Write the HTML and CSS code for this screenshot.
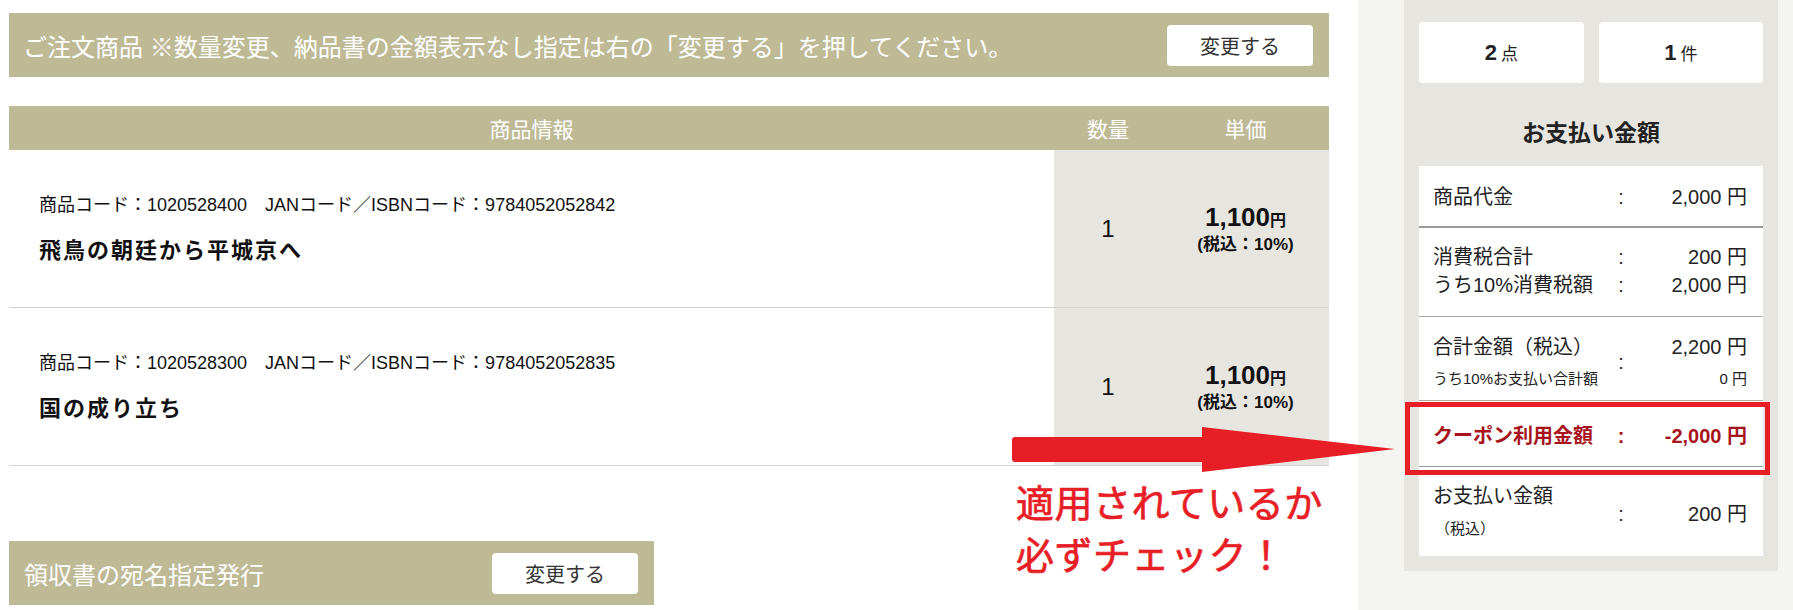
FILE: index.html
```html
<!DOCTYPE html>
<html lang="ja">
<head>
<meta charset="UTF-8">
<meta name="viewport" content="width=device-width, initial-scale=1.0">
<title>ご注文内容の確認</title>
<link rel="stylesheet" href="styles.css">
</head>
<body>
<div class="page">
  <div class="main">
    <div class="bar bar-order">
      <p class="bar-title">ご注文商品 ※数量変更、納品書の金額表示なし指定は右の「変更する」を押してください。</p>
      <button class="btn">変更する</button>
    </div>

    <div class="items">
      <div class="items-head">
        <div>商品情報</div>
        <div>数量</div>
        <div>単価</div>
      </div>
      <div class="item">
        <div class="item-info">
          <p class="item-code">商品コード：1020528400　JANコード／ISBNコード：9784052052842</p>
          <p class="item-name">飛鳥の朝廷から平城京へ</p>
        </div>
        <div class="item-qty">1</div>
        <div class="item-price">
          <p class="price"><b>1,100</b><span>円</span></p>
          <p class="tax">(税込：10%)</p>
        </div>
      </div>
      <div class="item">
        <div class="item-info">
          <p class="item-code">商品コード：1020528300　JANコード／ISBNコード：9784052052835</p>
          <p class="item-name">国の成り立ち</p>
        </div>
        <div class="item-qty">1</div>
        <div class="item-price">
          <p class="price"><b>1,100</b><span>円</span></p>
          <p class="tax">(税込：10%)</p>
        </div>
      </div>
    </div>

    <div class="bar bar-receipt">
      <p class="bar-title">領収書の宛名指定発行</p>
      <button class="btn">変更する</button>
    </div>
  </div>

  <aside class="side">
    <div class="panel">
      <div class="counts">
        <div class="count"><b>2</b> 点</div>
        <div class="count"><b>1</b> 件</div>
      </div>
      <h2 class="panel-title">お支払い金額</h2>
      <div class="summary">
        <div class="sum-row row-goods">
          <span>商品代金</span><span class="colon">:</span><span class="val">2,000 円</span>
        </div>
        <div class="sum-row row-tax">
          <span>消費税合計</span><span class="colon">:</span><span class="val">200 円</span>
          <span>うち10%消費税額</span><span class="colon">:</span><span class="val">2,000 円</span>
        </div>
        <div class="sum-row row-total">
          <span>合計金額（税込）</span><span class="colon span2">:</span><span class="val">2,200 円</span>
          <span class="small">うち10%お支払い合計額</span><span class="val small">0 円</span>
        </div>
        <div class="sum-row row-coupon">
          <span>クーポン利用金額</span><span class="colon">:</span><span class="val">-2,000 円</span>
        </div>
        <div class="sum-row row-pay">
          <span>お支払い金額</span><span class="colon span2">:</span><span class="val span2">200 円</span>
          <span class="small note">（税込）</span>
        </div>
      </div>
    </div>
  </aside>

  <!-- 注意書き (画像上の赤い矢印と文字) -->
  <svg class="note-arrow" width="390" height="50" viewBox="0 0 390 50">
    <path d="M5 12 H192 V2 L385 24 L192 47 V37 H5 Q2 37 2 34 V15 Q2 12 5 12 Z" fill="#e81e27"/>
  </svg>
  <p class="note-text">適用されているか<br>必ずチェック！</p>
</div>
</body>
</html>
```

FILE: styles.css
```css
body {
  margin: 0;
  background: #fff;
  color: #111;
  font-family: "Liberation Sans", "Noto Sans CJK JP", sans-serif;
}
p, h2 {
  margin: 0;
}
.page {
  position: relative;
  display: flex;
  min-height: 610px;
}
.main {
  width: 1320px;
  margin-left: 9px;
  padding-top: 13px;
}

/* 見出しバー */
.bar {
  display: flex;
  align-items: center;
  justify-content: space-between;
  height: 64px;
  padding: 0 16px 0 14px;
  box-sizing: border-box;
  background: #bebA96;
}
.bar-title {
  color: #fff;
  font-size: 24px;
}
.btn {
  width: 146px;
  height: 41px;
  border: none;
  border-radius: 4px;
  background: #fff;
  color: #333;
  font-family: inherit;
  font-size: 20px;
  cursor: pointer;
}
.bar-receipt {
  width: 645px;
  margin-top: 75px;
  padding-left: 15px;
}

/* 商品テーブル */
.items {
  margin-top: 29px;
}
.items-head,
.item {
  display: grid;
  grid-template-columns: 1045px 108px 167px;
}
.items-head {
  height: 44px;
  background: #bebA96;
  color: #fff;
  font-size: 21px;
}
.items-head div {
  display: flex;
  align-items: center;
  justify-content: center;
}
.item {
  height: 158px;
  box-sizing: border-box;
  border-bottom: 1px solid #d4d4d4;
}
.item-info {
  display: flex;
  flex-direction: column;
  justify-content: center;
  padding-left: 30px;
  padding-top: 2px;
}
.item-code {
  font-size: 18px;
  line-height: 26px;
  margin-bottom: 17px;
}
.item-name {
  font-size: 22px;
  line-height: 32px;
  font-weight: bold;
  letter-spacing: 2px;
}
.item-qty,
.item-price {
  display: flex;
  flex-direction: column;
  align-items: center;
  justify-content: center;
  background: #e6e5df;
}
.item-qty {
  font-size: 24px;
}
.price {
  line-height: 28px;
}
.price b {
  font-size: 26px;
}
.price span {
  font-size: 16px;
  font-weight: bold;
}
.tax {
  font-size: 17px;
  line-height: 20px;
  font-weight: bold;
}

/* 右側 お支払い金額 */
.side {
  width: 435px;
  margin-left: 29px;
  background: #f4f4f1;
}
.panel {
  width: 374px;
  margin-left: 46px;
  padding: 22px 15px 15px;
  box-sizing: border-box;
  background: #e6e5df;
}
.counts {
  display: grid;
  grid-template-columns: 1fr 1fr;
  gap: 15px;
}
.count {
  display: flex;
  align-items: center;
  justify-content: center;
  gap: 4px;
  height: 61px;
  border-radius: 4px;
  background: #fff;
  font-size: 17px;
  color: #222;
}
.count b {
  font-size: 22px;
}
.panel-title {
  margin: 35px 0 18px;
  font-size: 23px;
  line-height: 30px;
  text-align: center;
  color: #222;
}
.summary {
  background: #fff;
}
.sum-row {
  position: relative;
  display: grid;
  grid-template-columns: 176px 24px 114px;
  align-items: center;
  padding: 0 17px 0 14px;
  font-size: 20px;
  line-height: 30px;
  color: #222;
  border-bottom: 1px solid #aaa;
}
.colon {
  text-align: center;
}
.val {
  text-align: right;
  white-space: nowrap;
}
.span2 {
  grid-row: span 2;
}
.small {
  font-size: 15px;
}
.row-goods {
  padding-top: 16px;
  padding-bottom: 14px;
  border-bottom: 2px solid #999;
}
.row-tax {
  line-height: 28px;
  padding-top: 15px;
  padding-bottom: 17px;
}
.row-total {
  line-height: 34px;
  padding-top: 13px;
  padding-bottom: 6px;
}
.row-total .small {
  line-height: 30px;
}
.row-coupon {
  padding-top: 20px;
  padding-bottom: 15px;
  color: #a8141c;
  font-weight: bold;
  border-bottom-color: #999;
}
.row-coupon::after {
  content: "";
  position: absolute;
  left: -14px;
  right: -7px;
  top: 1px;
  bottom: -9px;
  border: 5px solid #e81e27;
}
.row-pay {
  padding-top: 14px;
  padding-bottom: 9px;
  border-bottom: none;
}
.row-pay .note {
  line-height: 36px;
  padding-left: 2px;
}

/* 注意書き */
.note-arrow {
  position: absolute;
  left: 1010px;
  top: 425px;
}
.note-text {
  position: absolute;
  left: 1016px;
  top: 478px;
  font-size: 38px;
  line-height: 52px;
  letter-spacing: 0.5px;
  color: #e81e27;
  -webkit-text-stroke: 0.7px #e81e27;
}
```
